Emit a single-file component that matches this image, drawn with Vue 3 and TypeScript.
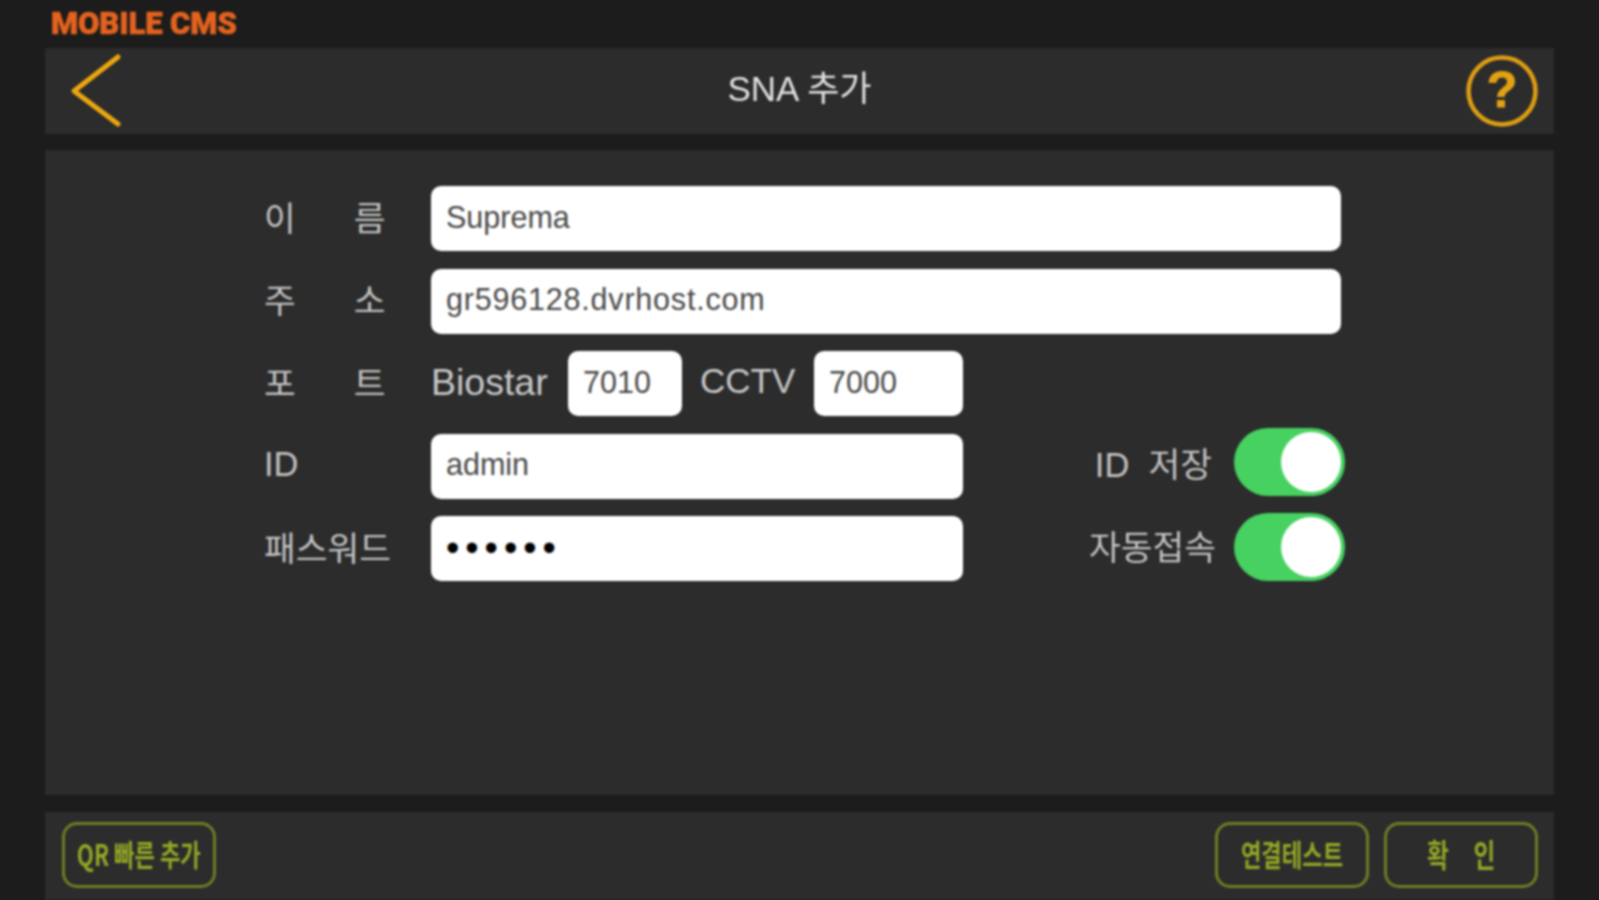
<template>
  <div class="screen">
    <div class="brand">MOBILE CMS</div>

    <header class="top-bar">
      <button class="icon-btn" aria-label="back">
        <svg width="56" height="78" viewBox="0 0 56 78">
          <path d="M51 5 L7 39 L51 72" fill="none" stroke="#eda70f" stroke-width="5" stroke-linecap="round" stroke-linejoin="round" />
        </svg>
      </button>
      <h1 class="title">SNA 추가</h1>
      <button class="icon-btn" aria-label="help">
        <svg width="72" height="72" viewBox="0 0 72 72">
          <circle cx="36" cy="36" r="33.5" fill="none" stroke="#dd9e13" stroke-width="4.5" />
          <text x="36" y="52" text-anchor="middle" class="help-mark">?</text>
        </svg>
      </button>
    </header>

    <main class="content">
      <div class="form-row">
        <label class="field-label spread"><span>이</span><span>름</span></label>
        <input v-model="form.name" class="field-input full" />
      </div>
      <div class="form-row">
        <label class="field-label spread"><span>주</span><span>소</span></label>
        <input v-model="form.address" class="field-input full address" />
      </div>
      <div class="form-row">
        <label class="field-label spread"><span>포</span><span>트</span></label>
        <span class="port-name">Biostar</span>
        <input v-model="form.biostarPort" class="field-input port-a" />
        <span class="port-name cctv">CCTV</span>
        <input v-model="form.cctvPort" class="field-input port-b" />
      </div>
      <div class="form-row">
        <label class="field-label latin">ID</label>
        <input v-model="form.id" class="field-input half" />
        <div class="option option-id">
          <span class="option-label">ID&nbsp; 저장</span>
          <button class="toggle" :class="{ on: form.saveId }" @click="form.saveId = !form.saveId">
            <span class="knob"></span>
          </button>
        </div>
      </div>
      <div class="form-row">
        <label class="field-label">패스워드</label>
        <input v-model="form.password" type="password" class="field-input half password" />
        <div class="option option-auto">
          <span class="option-label">자동접속</span>
          <button class="toggle" :class="{ on: form.autoConnect }" @click="form.autoConnect = !form.autoConnect">
            <span class="knob"></span>
          </button>
        </div>
      </div>
    </main>

    <footer class="bottom-bar">
      <button class="action"><span>QR 빠른 추가</span></button>
      <div class="actions-right">
        <button class="action"><span>연결테스트</span></button>
        <button class="action"><span class="confirm">확 인</span></button>
      </div>
    </footer>
  </div>
</template>

<script setup lang="ts">
import { reactive } from 'vue'

const form = reactive({
  name: 'Suprema',
  address: 'gr596128.dvrhost.com',
  biostarPort: '7010',
  cctvPort: '7000',
  id: 'admin',
  password: '123456',
  saveId: true,
  autoConnect: true
})
</script>

<style>
html,
body {
  margin: 0;
  background: #1c1c1c;
}
</style>

<style scoped>
.screen {
  width: 1509px;
  height: 900px;
  margin-left: 45px;
  display: flex;
  flex-direction: column;
  overflow: hidden;
  font-family: "Liberation Sans", "Noto Sans CJK KR", sans-serif;
  filter: blur(1px);
}

.brand {
  height: 48px;
  padding-left: 6px;
  box-sizing: border-box;
  font-family: Roboto, sans-serif;
  font-weight: 900;
  font-size: 31px;
  line-height: 48px;
  letter-spacing: -0.1px;
  color: #e4631f;
  -webkit-text-stroke: 0.6px #e4631f;
}

.top-bar {
  height: 86px;
  flex: none;
  background: #2c2c2c;
  display: flex;
  align-items: center;
  justify-content: space-between;
  padding: 0 16px 0 22px;
  margin-bottom: 16px;
}

.icon-btn {
  border: 0;
  padding: 0;
  background: none;
  display: flex;
}

.help-mark {
  font-family: "Liberation Sans", sans-serif;
  font-weight: 700;
  font-size: 50px;
  fill: #e2a213;
  stroke: #e2a213;
  stroke-width: 1px;
}

.title {
  margin: 0 0 11px 10px;
  font-size: 35px;
  font-weight: 400;
  color: #e2e2e2;
}

.content {
  flex: 1;
  background: #2c2c2c;
  padding: 36px 0 0 219px;
  display: flex;
  flex-direction: column;
  gap: 17.5px;
}

.form-row {
  height: 65px;
  display: flex;
  align-items: center;
}

.field-label {
  width: 167px;
  flex: none;
  font-size: 34.5px;
  color: #c2c2c2;
  margin-bottom: 6px;
}

.field-label.latin {
  margin-bottom: 3px;
}

.field-label.spread {
  display: flex;
  gap: 58px;
}

.field-input {
  height: 65px;
  box-sizing: border-box;
  border: 0;
  border-radius: 10px;
  background: #fff;
  padding: 0 15px 3px;
  font-family: "Liberation Sans", sans-serif;
  font-size: 30.5px;
  color: #484848;
  outline: none;
}

.field-input.full {
  width: 910px;
}

.field-input.address {
  letter-spacing: 0.8px;
}

.field-input.half {
  width: 532px;
}

.field-input.port-a {
  width: 114px;
}

.field-input.port-b {
  width: 149px;
}

.field-input.password {
  padding-bottom: 0;
  font-size: 38px;
  letter-spacing: 6px;
  color: #000;
}

.port-name {
  width: 137px;
  flex: none;
  font-size: 37.5px;
  color: #c8c8c8;
  margin-bottom: 2px;
}

.port-name.cctv {
  width: 132px;
  padding-left: 18px;
  box-sizing: border-box;
  font-size: 35px;
  margin-bottom: 6px;
}

.option {
  width: 382px;
  flex: none;
  display: flex;
  align-items: center;
  justify-content: flex-end;
}

.option-id {
  margin-bottom: 8px;
}

.option-auto {
  margin-bottom: 4px;
}

.option-auto .option-label {
  margin-bottom: 4px;
  margin-right: 18px;
}

.option-label {
  font-size: 34.5px;
  color: #c2c2c2;
  margin-right: 22px;
  white-space: nowrap;
}

.toggle {
  width: 111px;
  height: 68px;
  border: 0;
  border-radius: 34px;
  padding: 4px;
  background: #3a3a3a;
  display: flex;
}

.toggle.on {
  background: #46d160;
  justify-content: flex-end;
}

.knob {
  width: 60px;
  height: 60px;
  border-radius: 50%;
  background: #fff;
}

.bottom-bar {
  height: 88px;
  flex: none;
  margin-top: 17px;
  background: #2c2c2c;
  display: flex;
  justify-content: space-between;
  padding: 10px 16px 0 17px;
  box-sizing: border-box;
}

.actions-right {
  display: flex;
  gap: 15px;
}

.action {
  width: 154px;
  height: 66px;
  box-sizing: border-box;
  border: 3px solid #6e7d24;
  border-radius: 15px;
  background: none;
  padding: 0 0 4px;
  font-family: "Noto Sans CJK KR", sans-serif;
  font-size: 30px;
  font-weight: 700;
  color: #94a625;
  white-space: nowrap;
  display: flex;
  align-items: center;
  justify-content: center;
}

.action span {
  display: inline-block;
  transform: scaleX(0.74);
}

.action span.confirm {
  font-size: 32px;
  word-spacing: 26px;
}
</style>
